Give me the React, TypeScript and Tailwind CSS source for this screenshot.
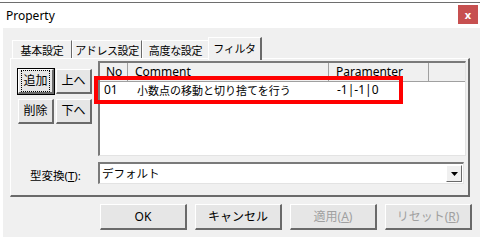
import React from "react";

const font = { fontFamily: '"Noto Sans", "Noto Sans CJK JP", sans-serif' };

function Btn({
  children,
  w,
  h,
  disabled,
  focused,
}: {
  children: React.ReactNode;
  w: string;
  h: string;
  disabled?: boolean;
  focused?: boolean;
}) {
  return (
    <div
      className={`${w} ${h} flex items-center justify-center bg-[#e6e6e6] border-t border-l border-t-white border-l-white border-r-2 border-b-2 border-r-[#6a6a6a] border-b-[#6a6a6a] ${
        focused ? "outline outline-1 outline-black" : ""
      }`}
    >
      <div
        className={`w-full h-full flex items-center justify-center whitespace-nowrap text-[12px] leading-none ${
          disabled ? "text-[#a0a0a0]" : "text-black"
        } ${focused ? "border border-dotted border-black m-[2px]" : ""}`}
      >
        {children}
      </div>
    </div>
  );
}

export default function App() {
  return (
    <div className="relative w-[480px] h-[243px] bg-white overflow-hidden whitespace-nowrap" style={font}>
      {/* top edge */}
      <div className="h-[2px] bg-white" />
      <div className="h-px bg-[#6e6e6e]" />
      {/* title bar */}
      <div className="h-[25px] flex items-start justify-between pl-[6px] pr-[2px] bg-white">
        <div className="text-[12px] leading-none text-black mt-[7px]">Property</div>
        <div className="mt-[2px] w-[20px] h-[19px] bg-[#c75050] flex items-center justify-center text-white text-[11px] font-bold leading-none">
          x
        </div>
      </div>
      {/* body */}
      <div className="ml-[3px] h-[209px] bg-[#f0f0f0] flex flex-col">
        {/* tabs */}
        <div className="mt-[9px] ml-[9px] h-[21px] flex items-end relative z-10">
          <div className="w-[60px] h-[18px] border-t border-l border-t-white border-l-white border-r border-r-[#6a6a6a] flex items-center justify-center text-[11px] tracking-[-0.2px] leading-none pt-[1px]">
            基本設定
          </div>
          <div className="w-[70px] h-[18px] border-t border-l border-t-white border-l-white border-r border-r-[#6a6a6a] flex items-center justify-center text-[11px] tracking-[-0.4px] leading-none pt-[1px]">
            アドレス設定
          </div>
          <div className="w-[66px] h-[18px] border-t border-l border-t-white border-l-white flex items-center justify-center text-[11px] tracking-[-0.3px] leading-none pt-[1px]">
            高度な設定
          </div>
          <div className="w-[54px] h-[23px] -mb-[2px] bg-[#f0f0f0] border-t border-l border-t-white border-l-white border-r-2 border-r-[#6a6a6a] flex items-start justify-center text-[11px] tracking-[-0.3px] leading-none pt-[5px]">
            フィルタ
          </div>
        </div>
        {/* panel */}
        <div className="ml-[7px] w-[460px] h-[139px] border-t border-l border-t-white border-l-white border-r-2 border-b-2 border-r-[#6a6a6a] border-b-[#6a6a6a] flex flex-col">
          <div className="flex pt-[2px]">
            <div className="ml-[7px] mt-[8px] grid grid-cols-2 gap-x-[2px] gap-y-[5px] h-fit">
              <Btn w="w-[36px]" h="h-[25px]" focused>
                追加
              </Btn>
              <Btn w="w-[36px]" h="h-[25px]">上へ</Btn>
              <Btn w="w-[36px]" h="h-[25px]">削除</Btn>
              <Btn w="w-[36px]" h="h-[25px]">下へ</Btn>
            </div>
            {/* list */}
            <div className="ml-[6px] w-[368px] h-[95px] bg-white border-t-2 border-l-2 border-t-[#7a7a7a] border-l-[#7a7a7a] border-r border-b border-r-[#e3e3e3] border-b-[#e3e3e3] flex flex-col">
              <div className="h-[19px] flex bg-[#f0f0f0] border-b border-b-[#a0a0a0] text-[12px] leading-none">
                <div className="w-[28px] border-r border-r-[#a0a0a0] pl-[6px] flex items-center">No</div>
                <div className="w-[201px] border-r border-r-[#a0a0a0] pl-[7px] flex items-center">Comment</div>
                <div className="w-[100px] border-r border-r-[#a0a0a0] pl-[7px] flex items-center">Paramenter</div>
                <div className="flex-1" />
              </div>
              <div className="h-[16px] flex text-[12px] leading-none items-center">
                <div className="w-[28px] pl-[4px]">01</div>
                <div className="w-[201px] pl-[9px] text-[11px]">小数点の移動と切り捨てを行う</div>
                <div className="w-[100px] pl-[8px]">-1|-1|0</div>
              </div>
            </div>
          </div>
          {/* combo row */}
          <div className="flex mt-[6px] items-center">
            <div className="w-[87px] pl-[19px] text-[11.5px] leading-none pt-[6px]">
              型変換(<span className="underline">T</span>):
            </div>
            <div className="w-[366px] h-[22px] bg-white border-t-2 border-l-2 border-t-[#7a7a7a] border-l-[#7a7a7a] border-r border-b border-r-[#e3e3e3] border-b-[#e3e3e3] flex items-center justify-between">
              <div className="pl-[2px] text-[11.5px] leading-none">デフォルト</div>
              <div className="mr-[1px] w-[16px] h-[17px] bg-[#f0f0f0] border-t border-l border-t-white border-l-white border-r border-b border-r-[#6a6a6a] border-b-[#6a6a6a] flex items-center justify-center">
                <svg width="7" height="4" viewBox="0 0 7 4">
                  <path d="M0 0H7L3.5 4Z" fill="#000" />
                </svg>
              </div>
            </div>
          </div>
        </div>
        {/* bottom buttons */}
        <div className="mt-[7px] ml-[97px] flex gap-[8px]">
          <Btn w="w-[87px]" h="h-[26px]">OK</Btn>
          <Btn w="w-[87px]" h="h-[26px]">キャンセル</Btn>
          <Btn w="w-[87px]" h="h-[26px]" disabled>
            適用(<span className="underline">A</span>)
          </Btn>
          <Btn w="w-[87px]" h="h-[26px]" disabled>
            リセット(<span className="underline">R</span>)
          </Btn>
        </div>
      </div>
      {/* red annotation */}
      <div className="absolute left-[94px] top-[76px] w-[309px] h-[28px] border-4 border-[#ff0000] z-20" />
    </div>
  );
}
